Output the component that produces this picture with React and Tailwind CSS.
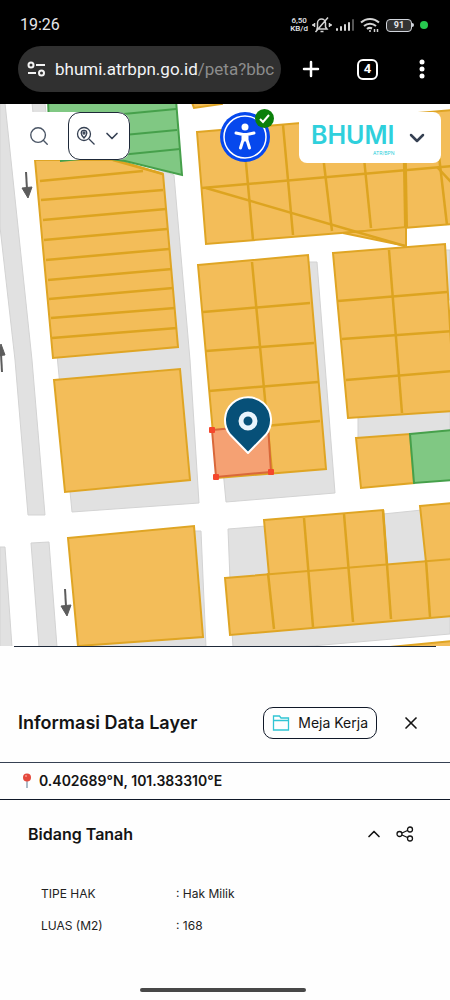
import React, { useState } from "react";
import { Search, ChevronDown, ChevronUp, X, Plus } from "lucide-react";

const roads = [
  "0,103 5,103 32,360 45,515 28,515 15,360 0,227",
  "31,543 49,542 57,647 39,647",
  "0,547 5,547 12,647 0,647",
  "32,103 45,103 46,113 33,113",
  "155,168 174,175 190,360 199,503 72,512 57,355",
  "190,531 201,531 206,647 80,647",
  "305,262 317,262 335,493 226,502 223,470",
  "445,250 450,250 450,300 446,300",
  "358,416 450,409 450,434 358,440",
  "228,529 266,526 270,577 230,580",
  "383,514 422,510 426,563 387,566",
  "232,632 450,613 450,634 300,647 233,647",
];

const parcels = [
  "35,160 116,160 163,174 178,347 53,358",
  "54,380 180,369 190,480 65,492",
  "68,538 194,526 203,637 78,646",
  "191,100 222,100 222,104 194,108",
  "197,132 452,110 452,224 206,244",
  "343,233 406,227 406,246",
  "198,265 308,255 326,469 217,478",
  "333,253 445,244 455,411 348,418",
  "356,438 410,434 414,483 361,488",
  "264,520 383,510 387,565 269,575",
  "420,506 452,503 452,560 426,562",
  "225,578 452,559 452,616 230,635",
  "390,647 452,641 452,650",
];

const greenParcels = [
  "48,100 176,100 182,175 125,161 50,150",
  "410,434 452,430 452,480 414,483",
];

const parcelLines = [
  // west block
  "40,181 143,171",
  "41,200 163,190",
  "43,220 166,209",
  "44,240 167,229",
  "46,260 169,249",
  "48,280 172,269",
  "49,299 173,288",
  "51,318 175,308",
  "52,338 177,328",
  "113,160 163,174",
  // north block
  "202,188 452,166",
  "243,130 253,240",
  "283,125 293,235",
  "319,122 332,231",
  "360,118 371,228",
  "434,113 447,225",
  "206,188 405,246",
  "437,167 452,183",
  // middle block
  "252,262 272,473",
  "203,312 310,303",
  "206,351 314,343",
  "209,391 318,382",
  "212,431 320,421",
  // east block
  "389,250 402,413",
  "338,301 447,292",
  "342,339 452,331",
  "346,380 452,371",
  // south block
  "304,518 313,627",
  "344,514 353,622",
  "383,510 391,619",
  "268,573 274,629",
  "426,560 430,617",
];

const corners = [
  [212, 430],
  [216, 477],
  [271, 472],
];

const details = [
  { label: "TIPE HAK", value: "Hak Milik" },
  { label: "LUAS (M2)", value: "168" },
];

const StatusBar = () => (
  <div className="flex items-center justify-between pt-[14px] pl-5 pr-6 h-9">
    <span className="text-base leading-6 text-gray-200">19:26</span>
    <div className="flex items-center">
      <div className="text-[8px] leading-[8px] font-medium text-gray-200 text-center mr-1">
        <div>6,50</div>
        <div>KB/d</div>
      </div>
      <svg className="w-5 h-5" viewBox="0 0 20 20" fill="none" stroke="#d4d4d4" strokeWidth="1.500">
        <path d="M5 14h10l-1.500-2V8a4 4 0 0 0-8 0v4zM8.500 16.500h3M2.500 8v4M1 9v2M17.500 8v4M19 9v2M16 2.500 3.500 17" />
      </svg>
      <svg className="w-5 h-5 ml-1" viewBox="0 0 20 20">
        <g fill="#d4d4d4">
          <rect x="0" y="13" width="2" height="3" rx="1" />
          <rect x="4" y="11" width="2" height="5" rx="1" />
          <rect x="8" y="9" width="2" height="7" rx="1" />
          <rect x="12" y="7" width="2" height="9" rx="1" />
        </g>
        <rect x="16" y="4" width="2" height="12" rx="1" fill="#555" />
      </svg>
      <svg className="w-5 h-5 ml-1" viewBox="0 0 20 20" fill="none" stroke="#d4d4d4" strokeWidth="2">
        <path d="M1 7.500a13 13 0 0 1 18 0M4 11a9 9 0 0 1 12 0M7 14a4.500 4.500 0 0 1 5 -.5" />
        <circle cx="10" cy="16" r="1" fill="#d4d4d4" stroke="none" />
        <path d="M14.500 14v3M17.500 14v3" strokeWidth="1.500" />
      </svg>
      <div className="ml-1.5 w-[26px] h-[13px] rounded border border-gray-300 bg-[#333] text-[9px] leading-[11px] font-bold text-gray-200 text-center">
        91
      </div>
      <div className="w-0.5 h-1 bg-gray-300 rounded-r" />
      <div className="w-2 h-2 ml-1.5 -mr-0.5 rounded-full bg-[#27c84f]" />
    </div>
  </div>
);

const BrowserBar = () => (
  <div className="flex items-center h-[68px] pl-[18px] pr-4 pb-0.5">
    <div className="flex flex-1 min-w-0 items-center h-[46px] rounded-full bg-[#303030] pl-[9px] pr-1 mr-[18px]">
      <svg className="w-5 h-5 shrink-0" viewBox="0 0 20 20" fill="none" stroke="#f3f3f3" strokeWidth="2">
        <circle cx="4" cy="6" r="2.500" />
        <path d="M9 6h9M1 14h8" />
        <circle cx="14.500" cy="14" r="2.500" />
      </svg>
      <div className="ml-2 flex-1 whitespace-nowrap text-[17px] leading-6 text-gray-100">
        bhumi.atrbpn.go.id<span className="text-[#8c8c8c]">/peta?bbc</span>
      </div>
    </div>
    <button aria-label="New tab" className="text-white">
      <Plus size={24} strokeWidth={2.5} />
    </button>
    <button
      aria-label="Open tabs"
      className="ml-[34px] w-[21px] h-[21px] rounded-md border-2 border-white text-white text-[13px] leading-4 font-bold"
    >
      4
    </button>
    <button aria-label="Menu" className="ml-8 w-6 h-6 flex justify-center text-white">
      <svg className="w-6 h-6" viewBox="0 0 24 24" fill="currentColor">
        <circle cx="12" cy="5" r="2.500" />
        <circle cx="12" cy="12" r="2.500" />
        <circle cx="12" cy="19" r="2.500" />
      </svg>
    </button>
  </div>
);

const ParcelMap = () => (
  <svg className="block w-full" viewBox="0 104 450 542" role="img" aria-label="Peta bidang tanah">
    <rect x="0" y="103" width="450" height="544" fill="#fff" />
    <g fill="#e1e1e1" stroke="#d3d3d3" strokeWidth="1">
      {roads.map((p) => (
        <polygon key={p} points={p} />
      ))}
    </g>
    <g fill="#f3bd59" stroke="#dfa524" strokeWidth="2">
      {parcels.map((p) => (
        <polygon key={p} points={p} />
      ))}
    </g>
    <g fill="none" stroke="#dda420" strokeWidth="2.500">
      {parcelLines.map((p) => (
        <polyline key={p} points={p} />
      ))}
      <path d="M404 112L406 227" strokeWidth="4" />
    </g>
    <g fill="#80c883" stroke="#46a04b" strokeWidth="2">
      {greenParcels.map((p) => (
        <polygon key={p} points={p} />
      ))}
      <path d="M50 121L176 109M50 142L177 130M60 161L180 149" />
    </g>
    <polygon points="212,430 268,425 271,472 216,477" fill="#f5a173" stroke="#d9683a" strokeWidth="2" />
    <g fill="#f5472c">
      {corners.map(([x, y]) => (
        <rect key={y} x={x - 3} y={y - 3} width="6" height="6" rx="1" />
      ))}
    </g>
    <g fill="#5c5c5c" stroke="#5c5c5c">
      <path d="M26 172L27 189" strokeWidth="2" />
      <path d="M22 188L32 187L28 198z" />
      <path d="M65 589L66 606" strokeWidth="2" />
      <path d="M61 606L71 605L67 616z" />
      <path d="M2 372L1 354" strokeWidth="2" />
      <path d="M-4 356L5 355L1 344z" />
    </g>
    <path
      d="M248 453L230 434.500A23 23 0 1 1 266 434.500z"
      fill="#075078"
      stroke="#fff"
      strokeWidth="2"
      strokeLinejoin="round"
    />
    <circle cx="248" cy="421" r="7" fill="none" stroke="#e9f4fc" strokeWidth="5" />
  </svg>
);

const MapControls = () => (
  <div className="absolute inset-x-0 top-2 flex items-start pl-[14px] pr-[9px]">
    <div className="flex items-center bg-white rounded-xl">
      <button aria-label="Cari" className="w-[54px] h-12 flex items-center justify-center text-gray-600 pr-1">
        <Search size={22} strokeWidth={1.5} />
      </button>
      <button
        aria-label="Cari lokasi"
        className="w-[62px] h-12 flex items-center justify-center gap-1.5 bg-white border border-gray-800 rounded-xl text-gray-700"
      >
        <svg className="w-5 h-5" viewBox="0 0 20 20" fill="none" stroke="currentColor" strokeWidth="1.300">
          <circle cx="8" cy="8" r="6.500" />
          <path d="M13 13L18.500 18.500" />
          <path d="M8 12C6 9.800 5.200 8.600 5.200 7.200a2.800 2.800 0 0 1 5.600 0c0 1.400-.8 2.600-2.800 4.800z" />
          <circle cx="8" cy="7" r="1" />
        </svg>
        <ChevronDown size={20} strokeWidth={2} />
      </button>
    </div>

    <button
      aria-label="Aksesibilitas"
      className="relative ml-auto w-[50px] h-[50px] rounded-full bg-[#0648ed]"
    >
      <svg viewBox="0 0 50 50" className="w-full h-full">
        <circle cx="25" cy="25" r="21" fill="none" stroke="#fff" strokeWidth="1.500" />
        <circle cx="25" cy="15" r="3.500" fill="#fff" />
        <path
          d="M16 21L23 22.500H27L34 21M25 23V28M23 22.500V28L20.500 36M27 22.500V28L29.500 36"
          fill="none"
          stroke="#fff"
          strokeWidth="3"
          strokeLinecap="round"
          strokeLinejoin="round"
        />
      </svg>
      <span className="absolute -top-[3px] -right-1 w-[19px] h-[19px] rounded-full bg-[#0b800b]">
        <svg viewBox="0 0 19 19" className="w-full h-full" fill="none" stroke="#fff" strokeWidth="2">
          <path d="M5 10L8 13L14 6" />
        </svg>
      </span>
    </button>

    <button
      aria-label="BHUMI"
      className="ml-[29px] w-[142px] h-[51px] flex items-center justify-between bg-white rounded-lg pl-3 pr-3"
    >
      <span className="flex flex-col items-end text-[#2fd0dc]">
        <span className="text-[25px] leading-[30px] font-semibold">BHUMI</span>
        <span className="text-[5px] leading-[6px]">ATR/BPN</span>
      </span>
      <ChevronDown size={24} strokeWidth={2.5} className="text-gray-700" />
    </button>
  </div>
);

const App = () => {
  const [showInfo, setShowInfo] = useState(true);
  const [expanded, setExpanded] = useState(true);

  return (
    <div className="min-h-screen flex flex-col bg-[#fefefe] font-['Inter',sans-serif] text-[#141414]">
      <header className="bg-black font-['Roboto',sans-serif]">
        <StatusBar />
        <BrowserBar />
      </header>

      <main className="relative overflow-hidden">
        <ParcelMap />
        <MapControls />
      </main>

      {showInfo && (
        <section className="flex-1">
          <div className="mx-[14px] border-t border-gray-800" />
          <div className="flex items-center pt-[60px] pb-[23px] pl-[18px] pr-[29px] border-b border-gray-700">
            <h2 className="flex-1 text-lg leading-6 font-semibold">Informasi Data Layer</h2>
            <button className="flex items-center gap-2 h-8 px-2 border border-gray-900 rounded-[10px] text-sm">
              <svg className="w-[18px] h-[18px]" viewBox="0 0 18 18" fill="none" stroke="#31c5d4" strokeWidth="1.300">
                <path d="M1.500 16V2h6l1.500 2h7.500v12zM1.500 6.500h15" />
              </svg>
              Meja Kerja
            </button>
            <button aria-label="Tutup" className="ml-6 w-5 h-5" onClick={() => setShowInfo(false)}>
              <X size={20} strokeWidth={2} />
            </button>
          </div>

          <div className="flex items-center h-[37px] pl-[22px] border-b border-gray-900">
            <svg className="w-[10px] h-4 mr-[7px]" viewBox="0 0 10 16">
              <path d="M5 7V15" stroke="#8fa3b5" strokeWidth="1.500" />
              <circle cx="5" cy="4.500" r="4" fill="#e4483c" />
              <circle cx="4" cy="3" r="1" fill="#f7978c" />
            </svg>
            <span className="text-sm leading-5 font-semibold">0.402689°N, 101.383310°E</span>
          </div>

          <div className="flex items-center pt-[22px] pl-7 pr-9">
            <h3 className="flex-1 text-base leading-6 font-semibold">Bidang Tanah</h3>
            <button aria-label="Ciutkan" onClick={() => setExpanded(!expanded)}>
              <ChevronUp size={20} strokeWidth={2} />
            </button>
            <button aria-label="Bagikan" className="ml-3">
              <svg className="w-[18px] h-[18px]" viewBox="0 0 18 18" fill="none" stroke="currentColor" strokeWidth="1.300">
                <circle cx="3.500" cy="9" r="2.500" />
                <circle cx="14" cy="4.500" r="2.500" />
                <circle cx="14" cy="13.500" r="2.500" />
                <path d="M6 8L11.500 5.500M6 10L11.500 12.500" />
              </svg>
            </button>
          </div>

          {expanded && (
            <table className="mt-8 ml-[41px] text-xs text-[#222]">
              <tbody>
                {details.map((item) => (
                  <tr key={item.label} className="h-8">
                    <th scope="row" className="w-[135px] text-left font-normal">
                      {item.label}
                    </th>
                    <td>: {item.value}</td>
                  </tr>
                ))}
              </tbody>
            </table>
          )}
        </section>
      )}

      <footer className="flex justify-center pb-2 mt-auto">
        <div className="w-[166px] h-1 mr-1 rounded-full bg-[#484848]" />
      </footer>
    </div>
  );
};

export default App;
